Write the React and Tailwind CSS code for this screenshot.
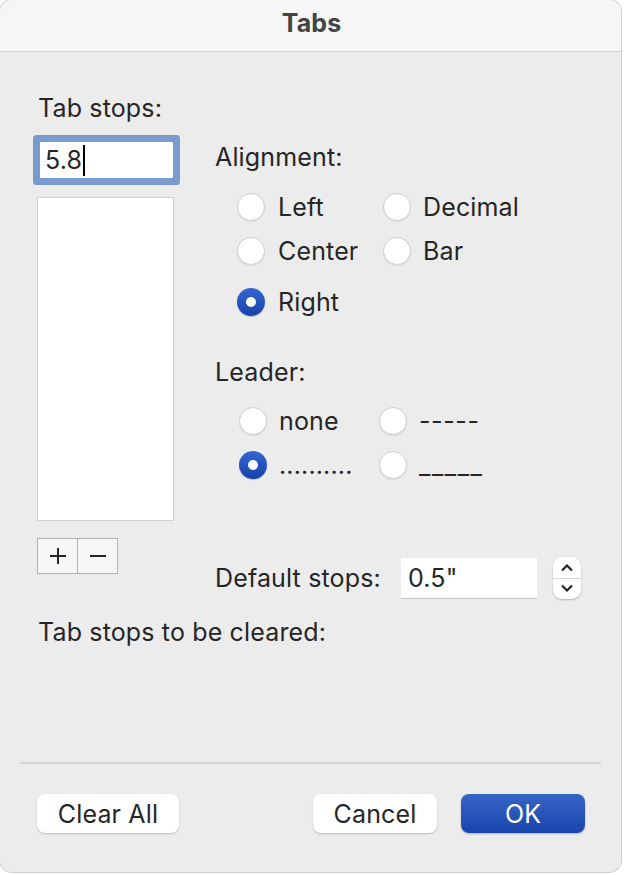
import React from "react";

const font = { fontFamily: "Inter, 'Liberation Sans', sans-serif" };

function Radio({ checked }) {
  if (checked) {
    return (
      <div className="flex h-[28px] w-[28px] shrink-0 items-center justify-center rounded-full bg-gradient-to-b from-[#3566d0] to-[#1741ab] shadow-[0_1px_1px_rgba(0,0,0,0.2)]">
        <div className="h-[10px] w-[10px] rounded-full bg-white" />
      </div>
    );
  }
  return (
    <div className="h-[28px] w-[28px] shrink-0 rounded-full border border-[#cfcfcf] bg-white shadow-[0_1px_1px_rgba(0,0,0,0.08)]" />
  );
}

function Option({ checked, label, width, gap, extra = "" }) {
  return (
    <div className={`flex items-center ${width} ${gap}`}>
      <Radio checked={checked} />
      <span className={extra}>{label}</span>
    </div>
  );
}

export default function App() {
  return (
    <div className="min-h-screen bg-white" style={font}>
      <div className="flex h-[872px] w-[621px] flex-col overflow-hidden rounded-[12px] bg-[#ececec] text-[25px] leading-[30px] tracking-[0.15px] text-[#262626] shadow-[0_0_0_1px_rgba(0,0,0,0.18)]">
        <div className="flex h-[52px] shrink-0 items-center justify-center border-b border-[#d3d3d3] bg-[#f6f6f6] pb-[5px]">
          <span className="pl-[2px] font-bold text-[#444444]">Tabs</span>
        </div>

        <div className="px-[38px] pt-[41px]">Tab stops:</div>

        <div className="mt-[19px] flex items-start px-[37px]">
          <div className="flex w-[138px] flex-col">
            <div className="ml-[3px] flex h-[36px] w-[133px] items-center rounded-[1px] bg-white pl-[5px] shadow-[0_0_0_7px_#7a9bcd]">
              <span>5.8</span>
              <span className="ml-[1px] h-[31px] w-[2px] bg-black" />
            </div>
            <div className="mt-[19px] h-[324px] w-[137px] border border-[#d2d2d2] bg-white" />
            <div className="mt-[17px] flex h-[36px] w-[81px] border border-[#b3b3b3] bg-[#f6f6f6]">
              <div className="flex flex-1 items-center justify-center border-r border-[#b3b3b3]">
                <svg width="18" height="18" viewBox="0 0 18 18">
                  <path d="M9 1v16M1 9h16" stroke="#262626" strokeWidth="2" />
                </svg>
              </div>
              <div className="flex flex-1 items-center justify-center">
                <svg width="18" height="18" viewBox="0 0 18 18">
                  <path d="M1 9h16" stroke="#262626" strokeWidth="2" />
                </svg>
              </div>
            </div>
          </div>

          <div className="ml-[40px] flex flex-col">
            <div>Alignment:</div>
            <div className="pl-[22px]">
              <div className="mt-[20px] flex h-[30px]">
                <Option label="Left" width="w-[146px]" gap="gap-[13px]" />
                <Option label="Decimal" width="" gap="gap-[12px]" />
              </div>
              <div className="mt-[14px] flex h-[30px]">
                <Option label="Center" width="w-[146px]" gap="gap-[13px]" />
                <Option label="Bar" width="" gap="gap-[12px]" />
              </div>
              <div className="mt-[21px] flex h-[30px]">
                <Option checked label="Right" width="w-[146px]" gap="gap-[13px]" />
              </div>
            </div>

            <div className="mt-[40px]">Leader:</div>
            <div className="pl-[24px]">
              <div className="mt-[19px] flex h-[30px]">
                <Option label="none" width="w-[140px]" gap="gap-[12px]" />
                <Option label="-----" width="" gap="gap-[12px]" extra="tracking-[0.6px]" />
              </div>
              <div className="mt-[14px] flex h-[30px]">
                <Option checked label=".........." width="w-[140px]" gap="gap-[12px]" />
                <Option label="_____" width="" gap="gap-[12px]" extra="tracking-[1.5px]" />
              </div>
            </div>

            <div className="mt-[77px] flex h-[42px] items-center">
              <div className="w-[186px]">Default stops:</div>
              <div className="flex h-[40px] w-[136px] items-center bg-white pl-[7px] shadow-[0_1px_0_#c4c4c4]">
                0.5"
              </div>
              <div className="ml-[16px] flex h-[42px] w-[28px] flex-col overflow-hidden rounded-[9px] bg-white shadow-[0_1px_2px_rgba(0,0,0,0.25)]">
                <div className="flex flex-1 items-center justify-center border-b border-[#d6d6d6]">
                  <svg width="14" height="9" viewBox="0 0 14 9">
                    <path d="M2 7.5L7 2.5l5 5" fill="none" stroke="#222" strokeWidth="2.2" />
                  </svg>
                </div>
                <div className="flex flex-1 items-center justify-center">
                  <svg width="14" height="9" viewBox="0 0 14 9">
                    <path d="M2 1.5l5 5 5-5" fill="none" stroke="#222" strokeWidth="2.2" />
                  </svg>
                </div>
              </div>
            </div>
          </div>
        </div>

        <div className="mt-[18px] px-[38px]">Tab stops to be cleared:</div>

        <div className="mx-[20px] mt-[115px] h-[2px] bg-[#d6d6d6]" />

        <div className="mt-[30px] flex px-[37px]">
          <button className="h-[39px] w-[142px] rounded-[8px] bg-white text-[#262626] shadow-[0_1px_2px_rgba(0,0,0,0.22)]">
            Clear All
          </button>
          <button className="ml-auto h-[39px] w-[124px] rounded-[8px] bg-white text-[#262626] shadow-[0_1px_2px_rgba(0,0,0,0.22)]">
            Cancel
          </button>
          <button className="ml-[24px] mr-[-1px] h-[39px] w-[124px] rounded-[8px] bg-gradient-to-b from-[#3565c6] to-[#1a44ac] text-white shadow-[0_1px_2px_rgba(0,0,0,0.25)]">
            OK
          </button>
        </div>
      </div>
    </div>
  );
}
